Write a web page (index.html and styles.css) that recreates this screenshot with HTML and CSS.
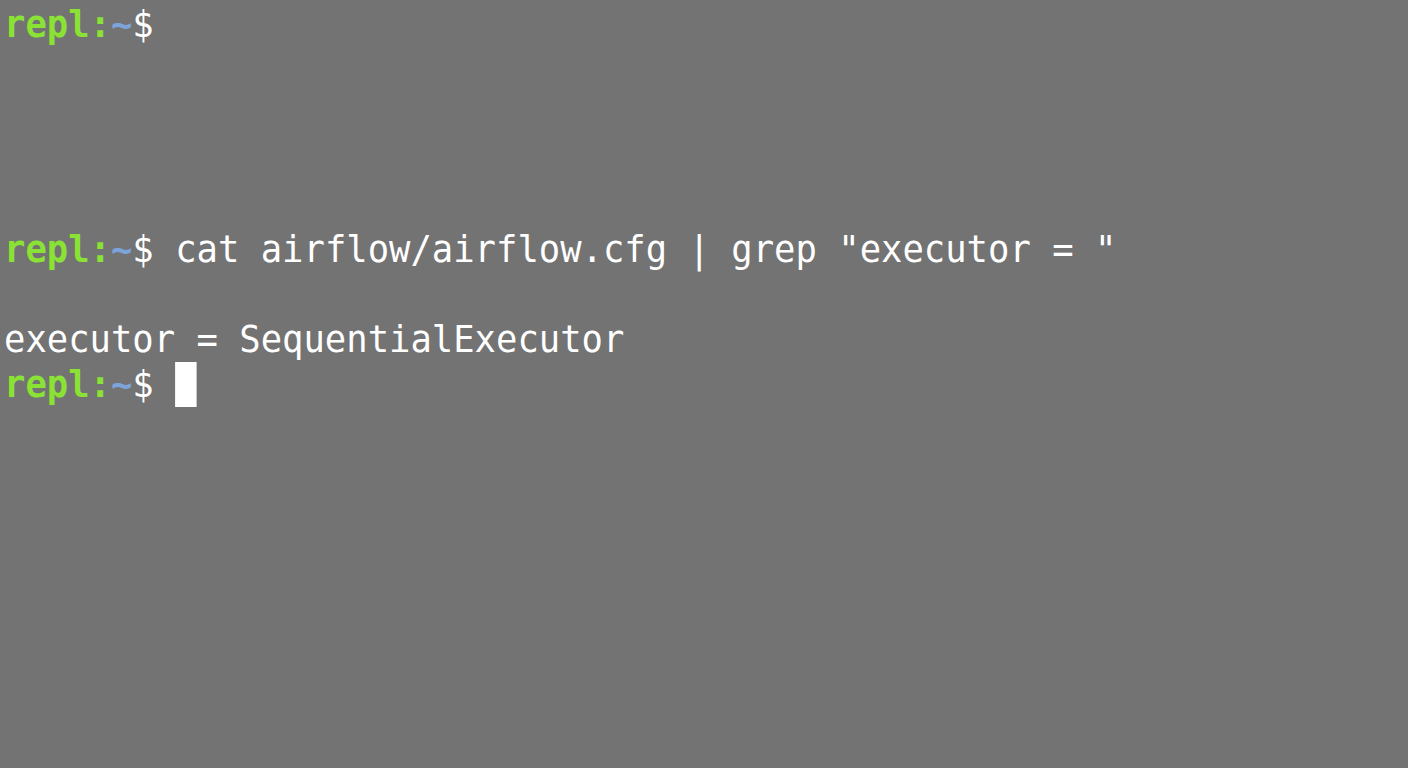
FILE: index.html
```html
<!DOCTYPE html>
<html>
<head>
<meta charset="utf-8">
<link rel="stylesheet" href="styles.css">
</head>
<body>
<div class="screen">
<div class="term">
<div class="line"><span class="user">repl:</span><span class="dir">~</span>$</div>
<div class="line"></div>
<div class="line"></div>
<div class="line"></div>
<div class="line"></div>
<div class="line"><span class="user">repl:</span><span class="dir">~</span>$ cat airflow/airflow.cfg | grep "executor = "</div>
<div class="line"></div>
<div class="line">executor = SequentialExecutor</div>
<div class="line"><span class="user">repl:</span><span class="dir">~</span>$ <span class="cursor"></span></div>
</div>
</div>
</body>
</html>
```
FILE: styles.css
```css
html, body {
  margin: 0;
  padding: 0;
  background: #737373;
  height: 100%;
  overflow: hidden;
}
.screen {
  padding: 2px 0 0 4px;
}
.term {
  font-family: "DejaVu Sans Mono", monospace;
  font-size: 38px;
  line-height: 45px;
  color: #ffffff;
  transform: scaleX(0.935);
  transform-origin: left top;
}
.line {
  height: 45px;
  white-space: pre;
}
.user {
  color: #8ae234;
  font-weight: bold;
}
.dir {
  color: #7ca3da;
  font-weight: bold;
}
.cursor {
  display: inline-block;
  width: 1ch;
  height: 45px;
  background: #ffffff;
  vertical-align: top;
}
```
